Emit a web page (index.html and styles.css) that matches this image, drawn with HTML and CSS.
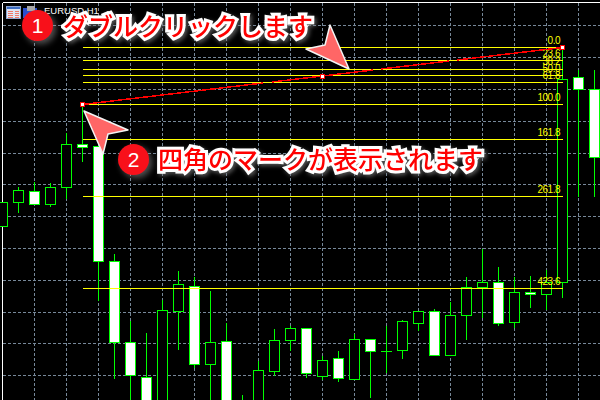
FILE: index.html
```html
<!DOCTYPE html>
<html lang="ja">
<head>
<meta charset="utf-8">
<title>フィボナッチ</title>
<link rel="stylesheet" href="styles.css">
</head>
<body>
<main class="stage">
<svg class="chart" width="600" height="400" viewBox="0 0 600 400">
  <g class="frame">
    <line x1="2.5" y1="2.5" x2="600" y2="2.5"/>
    <line x1="2.5" y1="2.5" x2="2.5" y2="400"/>
  </g>
  <path class="grid" d="M3 25.5H600M3 57.5H600M3 89.5H600M3 121.5H600M3 153.5H600M3 184.5H600M3 216.5H600M3 248.5H600M3 280.5H600M3 312.5H600M3 343.5H600M3 375.5H600"/>
  <path class="grid" d="M34.5 3V400M66.5 3V400M98.5 3V400M130.5 3V400M162.5 3V400M194.5 3V400M226.5 3V400M258.5 3V400M290.5 3V400M322.5 3V400M354.5 3V400M386.5 3V400M418.5 3V400M450.5 3V400M482.5 3V400M514.5 3V400M546.5 3V400M578.5 3V400"/>

  <path class="wick" d="M18.5 187V213M34.5 182V205M50.5 183V207M66.5 133V199M82.5 104V162M98.5 146V301M114.5 254V379M130.5 321V400M146.5 333V400M162.5 300V400M178.5 271V350M194.5 277V368M210.5 291V400M226.5 323V400M242.5 395V400M258.5 361V400M274.5 329V376M290.5 326V351M306.5 328V378M322.5 356V380M338.5 351V382M354.5 334V379M370.5 339V398M386.5 326V373M402.5 320V359M418.5 311V331M434.5 309V355M450.5 302V355M466.5 277V340M482.5 249V318M498.5 267V326M514.5 277V328M530.5 276V308M546.5 270V310M562.5 47V298M578.5 70V197M594.5 70V197"/>

  <g class="body-black">
    <rect x="-2.5" y="202.5" width="10" height="24"/>
    <rect x="13.5" y="190.5" width="10" height="12"/>
    <rect x="45.5" y="187.5" width="10" height="17"/>
    <rect x="61.5" y="144.5" width="10" height="43"/>
    <rect x="157.5" y="310.5" width="10" height="100"/>
    <rect x="173.5" y="284.5" width="10" height="27"/>
    <rect x="205.5" y="342.5" width="10" height="22"/>
    <rect x="253.5" y="370.5" width="10" height="40"/>
    <rect x="269.5" y="340.5" width="10" height="31"/>
    <rect x="285.5" y="328.5" width="10" height="12"/>
    <rect x="317.5" y="360.5" width="10" height="16"/>
    <rect x="349.5" y="339.5" width="10" height="40"/>
    <rect x="397.5" y="321.5" width="10" height="29"/>
    <rect x="413.5" y="311.5" width="10" height="12"/>
    <rect x="445.5" y="315.5" width="10" height="40"/>
    <rect x="461.5" y="287.5" width="10" height="28"/>
    <rect x="477.5" y="282.5" width="10" height="5"/>
    <rect x="509.5" y="292.5" width="10" height="30"/>
    <rect x="541.5" y="282.5" width="10" height="12"/>
    <rect x="557.5" y="79.5" width="10" height="203"/>
  </g>
  <g class="body-white">
    <rect x="29.5" y="191.5" width="10" height="13"/>
    <rect x="77.5" y="144.5" width="10" height="3"/>
    <rect x="93.5" y="146.5" width="10" height="115"/>
    <rect x="109.5" y="261.5" width="10" height="81"/>
    <rect x="125.5" y="342.5" width="10" height="33"/>
    <rect x="141.5" y="377.5" width="10" height="30"/>
    <rect x="189.5" y="286.5" width="10" height="78"/>
    <rect x="221.5" y="341.5" width="10" height="70"/>
    <rect x="301.5" y="328.5" width="10" height="45"/>
    <rect x="333.5" y="358.5" width="10" height="20"/>
    <rect x="365.5" y="339.5" width="10" height="12"/>
    <rect x="429.5" y="311.5" width="10" height="44"/>
    <rect x="493.5" y="282.5" width="10" height="41"/>
    <rect x="525.5" y="292.5" width="10" height="2"/>
    <rect x="573.5" y="77.5" width="10" height="12"/>
    <rect x="589.5" y="89.5" width="10" height="68"/>
  </g>
  <path class="wick" d="M381 351.5H392"/>

  <path class="fib" d="M83 47.5H563M83 60.5H563M83 69.5H563M83 75.5H563M83 82.5H563M83 104.5H563M83 139.5H563M83 196.5H563M83 288.5H563"/>
  <g class="fib-labels">
    <text x="560" y="44">0.0</text>
    <text x="560" y="57">23.6</text>
    <text x="560" y="65">38.2</text>
    <text x="560" y="72">50.0</text>
    <text x="560" y="79">61.8</text>
    <text x="560" y="101">100.0</text>
    <text x="560" y="136">161.8</text>
    <text x="560" y="193">261.8</text>
    <text x="560" y="285">423.6</text>
  </g>

  <path class="trend" d="M82.5 104.5L263 83M272 82L373 70M381 69L449 61M457 60L562.5 47.5"/>
  <g class="handle">
    <rect x="80.5" y="102.5" width="4" height="4"/>
    <rect x="320.5" y="74.5" width="4" height="4"/>
    <rect x="560.5" y="45.5" width="4" height="4"/>
  </g>

  <g class="tab-icon">
    <rect class="tab-back" x="6.5" y="6.5" width="14" height="12"/>
    <rect class="tab-head" x="7" y="7" width="13" height="2"/>
    <path class="tab-rows" d="M8 11H13M8 13H13M8 15H13M8 17H13M15 11H19M15 13H19M15 15H19M15 17H19"/>
  </g>
  <g class="disk-icon">
    <rect class="disk-blue" x="23" y="8" width="14" height="10"/>
    <rect class="disk-gray" x="27" y="6" width="8" height="5"/>
  </g>
  <text class="symbol" x="44" y="14">EURUSD,H1</text>

  <polygon class="pointer" points="349,69 330,25 325,45 306,49"/>
  <polygon class="pointer" points="84,111 128,130 108,134 103,154"/>
</svg>

<div class="badge badge-one">1</div>
<p class="callout callout-one">ダブルクリックします</p>
<div class="badge badge-two">2</div>
<p class="callout callout-two">四角のマークが表示されます</p>
</main>
</body>
</html>
```
FILE: styles.css
```css
html, body {
  margin: 0;
  padding: 0;
  background: #000;
}
.stage {
  position: relative;
  width: 600px;
  height: 400px;
  overflow: hidden;
  background: #000;
}
.chart {
  display: block;
}
.frame line {
  stroke: #fff;
  stroke-width: 1;
  shape-rendering: crispEdges;
}
.grid {
  fill: none;
  stroke: #778899;
  stroke-width: 1;
  stroke-dasharray: 3 2;
  shape-rendering: crispEdges;
}
.wick {
  fill: none;
  stroke: #00ff00;
  stroke-width: 1;
  shape-rendering: crispEdges;
}
.body-black rect {
  fill: #000;
  stroke: #00ff00;
  shape-rendering: crispEdges;
}
.body-white rect {
  fill: #fff;
  stroke: #00ff00;
  shape-rendering: crispEdges;
}
.fib {
  fill: none;
  stroke: #ffff00;
  shape-rendering: crispEdges;
}
.fib-labels text {
  font-family: "Liberation Sans", Arial, sans-serif;
  font-size: 10px;
  letter-spacing: -0.5px;
  fill: #ffff00;
  text-anchor: end;
}
.trend {
  fill: none;
  stroke: #ff0000;
  stroke-width: 1.5;
  shape-rendering: crispEdges;
}
.handle rect {
  fill: #fff;
  stroke: #ff0000;
  shape-rendering: crispEdges;
}
.tab-back {
  fill: #dfe6f5;
  stroke: #8fa6cf;
}
.tab-head {
  fill: #3f6fc4;
}
.tab-rows {
  stroke: #f07a6a;
  fill: none;
  shape-rendering: crispEdges;
}
.disk-blue {
  fill: #2a4fd0;
}
.disk-gray {
  fill: #a9a9a9;
}
.symbol {
  font-family: "Liberation Sans", Arial, sans-serif;
  font-size: 9.5px;
  fill: #fff;
}
.pointer {
  fill: #ff6666;
  stroke: #f4f4f4;
  stroke-width: 1.5;
  stroke-linejoin: round;
}
.badge {
  position: absolute;
  width: 31px;
  height: 31px;
  border-radius: 50%;
  background: #f8101a;
  box-shadow: 3px 3px 6px rgba(150, 150, 150, 0.55);
  color: #fff;
  font-family: "Liberation Sans", Arial, sans-serif;
  font-size: 21px;
  line-height: 31px;
  text-align: center;
}
.badge-one {
  left: 22px;
  top: 10px;
}
.badge-two {
  left: 118px;
  top: 144px;
}
.callout {
  position: absolute;
  margin: 0;
  color: #ff0000;
  font-family: "Noto Sans CJK JP", sans-serif;
  font-size: 25px;
  font-weight: 500;
  line-height: 30px;
  white-space: nowrap;
  -webkit-text-stroke: 6px #fff;
  paint-order: stroke fill;
  filter: drop-shadow(2px 2px 2px rgba(120, 120, 120, 0.7));
}
.callout-one {
  left: 63px;
  top: 10px;
}
.callout-two {
  left: 158px;
  top: 143px;
}
```
